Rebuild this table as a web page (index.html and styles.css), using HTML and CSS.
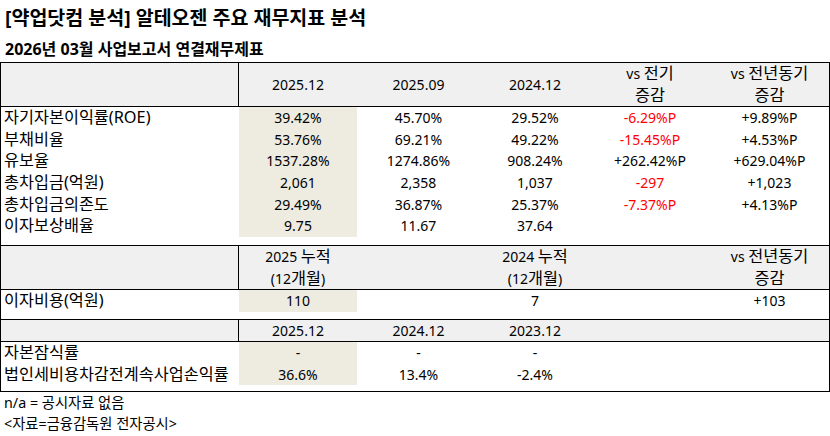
FILE: index.html
```html
<!DOCTYPE html>
<html lang="ko">
<head>
<meta charset="utf-8">
<title>알테오젠 주요 재무지표 분석</title>
<link rel="stylesheet" href="styles.css">
</head>
<body>
<div class="sheet">
  <h1 class="title">[약업닷컴 분석] 알테오젠 주요 재무지표 분석</h1>
  <h2 class="subtitle">2026년 03월 사업보고서 연결재무제표</h2>
  <div class="table">
    <div class="row head tall">
      <div class="cell lbl"></div>
      <div class="cell">2025.12</div>
      <div class="cell">2025.09</div>
      <div class="cell">2024.12</div>
      <div class="cell">vs <span class="ko">전기</span><br><span class="ko">증감</span></div>
      <div class="cell">vs <span class="ko">전년동기</span><br><span class="ko">증감</span></div>
    </div>
    <div class="row">
      <div class="cell lbl">자기자본이익률(ROE)</div>
      <div class="cell hl">39.42%</div>
      <div class="cell">45.70%</div>
      <div class="cell">29.52%</div>
      <div class="cell neg">-6.29%P</div>
      <div class="cell">+9.89%P</div>
    </div>
    <div class="row">
      <div class="cell lbl">부채비율</div>
      <div class="cell hl">53.76%</div>
      <div class="cell">69.21%</div>
      <div class="cell">49.22%</div>
      <div class="cell neg">-15.45%P</div>
      <div class="cell">+4.53%P</div>
    </div>
    <div class="row">
      <div class="cell lbl">유보율</div>
      <div class="cell hl">1537.28%</div>
      <div class="cell">1274.86%</div>
      <div class="cell">908.24%</div>
      <div class="cell">+262.42%P</div>
      <div class="cell">+629.04%P</div>
    </div>
    <div class="row">
      <div class="cell lbl">총차입금(억원)</div>
      <div class="cell hl">2,061</div>
      <div class="cell">2,358</div>
      <div class="cell">1,037</div>
      <div class="cell neg">-297</div>
      <div class="cell">+1,023</div>
    </div>
    <div class="row">
      <div class="cell lbl">총차입금의존도</div>
      <div class="cell hl">29.49%</div>
      <div class="cell">36.87%</div>
      <div class="cell">25.37%</div>
      <div class="cell neg">-7.37%P</div>
      <div class="cell">+4.13%P</div>
    </div>
    <div class="row">
      <div class="cell lbl">이자보상배율</div>
      <div class="cell hl">9.75</div>
      <div class="cell">11.67</div>
      <div class="cell">37.64</div>
      <div class="cell"></div>
      <div class="cell"></div>
    </div>
    <div class="gap g8"></div>

    <div class="row head tall">
      <div class="cell lbl"></div>
      <div class="cell">2025 <span class="ko">누적</span><br>(12<span class="ko">개월</span>)</div>
      <div class="cell"></div>
      <div class="cell">2024 <span class="ko">누적</span><br>(12<span class="ko">개월</span>)</div>
      <div class="cell"></div>
      <div class="cell">vs <span class="ko">전년동기</span><br><span class="ko">증감</span></div>
    </div>
    <div class="row">
      <div class="cell lbl">이자비용(억원)</div>
      <div class="cell hl">110</div>
      <div class="cell"></div>
      <div class="cell">7</div>
      <div class="cell"></div>
      <div class="cell">+103</div>
    </div>
    <div class="gap g7"></div>

    <div class="row head short">
      <div class="cell lbl"></div>
      <div class="cell">2025.12</div>
      <div class="cell">2024.12</div>
      <div class="cell">2023.12</div>
      <div class="cell"></div>
      <div class="cell"></div>
    </div>
    <div class="row">
      <div class="cell lbl">자본잠식률</div>
      <div class="cell hl">-</div>
      <div class="cell">-</div>
      <div class="cell">-</div>
      <div class="cell"></div>
      <div class="cell"></div>
    </div>
    <div class="row">
      <div class="cell lbl">법인세비용차감전계속사업손익률</div>
      <div class="cell hl">36.6%</div>
      <div class="cell">13.4%</div>
      <div class="cell">-2.4%</div>
      <div class="cell"></div>
      <div class="cell"></div>
    </div>
    <div class="gap g6"></div>
  </div>
  <p class="note">n/a = 공시자료 없음</p>
  <p class="note">&lt;자료=금융감독원 전자공시&gt;</p>
</div>
</body>
</html>
```

FILE: styles.css
```css
* {
  box-sizing: border-box;
}

body {
  margin: 0;
  background: #fff;
  color: #000;
  font-family: "Noto Sans", "Noto Sans CJK KR", sans-serif;
}

.title {
  margin: 0;
  padding: 5px 5px 0;
  font-size: 19.5px;
  font-weight: 700;
  line-height: 26px;
}

.subtitle {
  margin: 8px 0 3px;
  padding-left: 5px;
  font-size: 16px;
  font-weight: 700;
  line-height: 20px;
}

.table {
  width: 830px;
  border-left: 1px solid #000;
  border-right: 1px solid #000;
  border-bottom: 1px solid #000;
}

.row {
  display: grid;
  grid-template-columns: 238px 118px 123px 110px 120px 1fr;
  height: 21.7px;
  line-height: 21.7px;
  font-size: 14px;
}

.cell {
  text-align: center;
  white-space: nowrap;
}

.cell.lbl {
  text-align: left;
  padding-left: 3px;
  font-size: 16.3px;
}

.ko {
  font-size: 16.3px;
}

.hl {
  background: #eeebe0;
}

.neg {
  color: #ff0000;
}

.head {
  background: #f0f0f0;
  border-top: 1px solid #000;
  border-bottom: 1px solid #000;
  align-items: center;
}

.head .lbl {
  align-self: stretch;
  border-right: 1px solid #000;
}

.head.tall {
  height: 45px;
  line-height: 21.5px;
}

.head.short {
  height: 23px;
  line-height: 21px;
}

.gap.g8 {
  height: 8px;
}

.gap.g7 {
  height: 7px;
}

.gap.g6 {
  height: 6px;
}

.note {
  margin: 0;
  padding-left: 4px;
  font-size: 14.3px;
  line-height: 21px;
}
```
